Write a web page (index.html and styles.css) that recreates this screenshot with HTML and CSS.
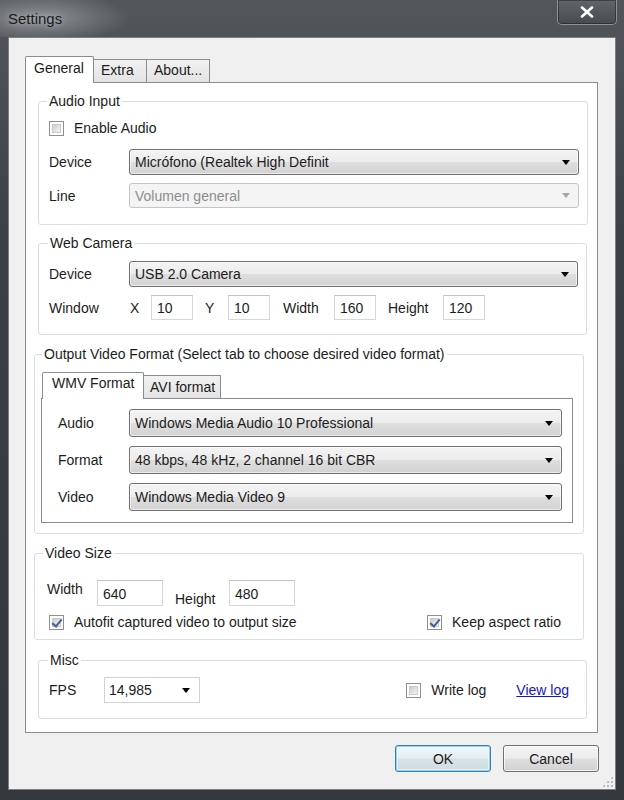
FILE: index.html
```html
<!DOCTYPE html>
<html lang="en">
<head>
  <meta charset="UTF-8" />
  <title>Settings</title>
  <link rel="stylesheet" href="styles.css">
</head>
<body>
  <div class="window">
    <div class="titlebar">
      <span class="title">Settings</span>
      <div class="close">
        <svg width="14" height="12" viewBox="0 0 14 12"><path d="M2 1.5 L12 10.5 M12 1.5 L2 10.5" stroke="#fff" stroke-width="2.6" stroke-linecap="round"/></svg>
      </div>
    </div>

    <div class="client">
      <div class="tabs">
        <div class="tab active">General</div>
        <div class="tab">Extra</div>
        <div class="tab">About...</div>
      </div>

      <div class="panel">
        <fieldset class="group audio">
          <legend>Audio Input</legend>
          <div class="check-row">
            <span class="checkbox"></span>
            <span>Enable Audio</span>
          </div>
          <div class="row r-device">
            <span class="lbl">Device</span>
            <div class="combo"><span>Micrófono (Realtek High Definit</span><i class="arrow"></i></div>
          </div>
          <div class="row r-line">
            <span class="lbl">Line</span>
            <div class="combo disabled"><span>Volumen general</span><i class="arrow"></i></div>
          </div>
        </fieldset>

        <fieldset class="group webcam">
          <legend>Web Camera</legend>
          <div class="row">
            <span class="lbl">Device</span>
            <div class="combo"><span>USB 2.0 Camera</span><i class="arrow"></i></div>
          </div>
          <div class="row r-window">
            <span class="lbl">Window</span>
            <span class="lbl-x">X</span>
            <div class="text small">10</div>
            <span class="lbl-y">Y</span>
            <div class="text small">10</div>
            <span class="lbl-w">Width</span>
            <div class="text small">160</div>
            <span class="lbl-h">Height</span>
            <div class="text small">120</div>
          </div>
        </fieldset>

        <fieldset class="group output">
          <legend>Output Video Format (Select tab to choose desired video format)</legend>
          <div class="tabs inner">
            <div class="tab active">WMV Format</div>
            <div class="tab">AVI format</div>
          </div>
          <div class="inner-panel">
            <div class="row">
              <span class="lbl">Audio</span>
              <div class="combo"><span>Windows Media Audio 10 Professional</span><i class="arrow"></i></div>
            </div>
            <div class="row">
              <span class="lbl">Format</span>
              <div class="combo"><span>48 kbps, 48 kHz, 2 channel 16 bit CBR</span><i class="arrow"></i></div>
            </div>
            <div class="row">
              <span class="lbl">Video</span>
              <div class="combo"><span>Windows Media Video 9</span><i class="arrow"></i></div>
            </div>
          </div>
        </fieldset>

        <fieldset class="group size">
          <legend>Video Size</legend>
          <div class="row r-size">
            <span class="lbl-sw">Width</span>
            <div class="text wide">640</div>
            <span class="lbl-sh">Height</span>
            <div class="text wide">480</div>
          </div>
          <div class="check-row r-fit">
            <span class="checkbox checked"></span>
            <span>Autofit captured video to output size</span>
            <span class="checkbox checked push"></span>
            <span>Keep aspect ratio</span>
          </div>
        </fieldset>

        <fieldset class="group misc">
          <legend>Misc</legend>
          <div class="row">
            <span class="lbl-fps">FPS</span>
            <div class="combo flat"><span>14,985</span><i class="arrow"></i></div>
            <span class="checkbox push"></span>
            <span>Write log</span>
            <a class="link" href="#">View log</a>
          </div>
        </fieldset>
      </div>

      <div class="buttons">
        <div class="btn default">OK</div>
        <div class="btn">Cancel</div>
      </div>
      <div class="grip"></div>
    </div>
  </div>
</body>
</html>
```

FILE: styles.css
```css
* {
  box-sizing: border-box;
}
body {
  margin: 0;
  font-family: "Liberation Sans", Arial, sans-serif;
  font-size: 14px;
  color: #1c1c1c;
  background: #2f3337;
}
.window {
  width: 624px;
  height: 800px;
  background: linear-gradient(180deg, #53575c 0%, #3c4045 30%, #34383d 100%);
}

/* title bar */
.titlebar {
  height: 37px;
  display: flex;
  justify-content: space-between;
  align-items: flex-start;
  padding-left: 8px;
  background: radial-gradient(ellipse 90px 26px at 40px 18px, rgba(190, 195, 200, 0.55), rgba(190, 195, 200, 0) 100%);
}
.title {
  margin-top: 10px;
  font-size: 15px;
  color: #1b1b1b;
  text-shadow: 0 0 6px rgba(255, 255, 255, 0.5);
}
.close {
  width: 60px;
  height: 25px;
  margin-right: 7px;
  border: 1px solid #8d9297;
  border-top: none;
  border-radius: 0 0 5px 5px;
  background: linear-gradient(180deg, #60656a, #464b50);
  box-shadow: inset 0 0 0 1px rgba(0, 0, 0, 0.35);
  display: flex;
  justify-content: center;
  align-items: center;
}

/* client area */
.client {
  position: relative;
  margin-left: 8px;
  width: 608px;
  height: 753px;
  background: #f0f0f0;
  border: 1px solid #7b7f83;
  padding: 17px 16px 0 16px;
}
.tabs {
  display: flex;
  align-items: flex-end;
  height: 27px;
}
.tab {
  height: 23px;
  padding: 2px 8px 0 7px;
  border: 1px solid #898c95;
  border-bottom: none;
  border-left: none;
  background: linear-gradient(180deg, #f2f2f2, #e3e3e3);
}
.tab.active {
  height: 27px;
  padding: 3px 10px 0 8px;
  border-left: 1px solid #898c95;
  border-radius: 2px 2px 0 0;
  background: #fff;
  margin-bottom: -1px;
  position: relative;
  z-index: 1;
}
.tabs .tab:nth-child(2) { width: 53px; }
.tabs .tab:nth-child(3) { width: 63px; }
.tabs .tab.active { width: 69px; }
.panel {
  width: 573px;
  height: 651px;
  border: 1px solid #898c95;
  background: #fff;
  padding-top: 10px;
}

/* group boxes */
.group {
  margin: 0;
  padding: 0;
  min-width: 0;
  border: 1px solid #d5dfe5;
  border-radius: 3px;
}
.group legend {
  margin-left: -2px;
  padding: 0 2px;
  line-height: 16px;
  height: 16px;
}
.row {
  display: flex;
  align-items: center;
}
.lbl {
  width: 80px;
  flex-shrink: 0;
}
.check-row {
  display: flex;
  align-items: center;
  height: 20px;
}

.audio {
  margin-left: 12px;
  width: 550px;
  height: 132px;
  padding: 9px 8px 0 10px;
}
.audio .r-device { margin-top: 11px; }
.audio .r-line { margin-top: 8px; }
.audio .r-line .combo { height: 25px; }

.webcam {
  margin: 10px 0 0 12px;
  width: 549px;
  height: 100px;
  padding: 10px 8px 0 10px;
}
.webcam legend { margin-left: -1px; }
.r-window { margin-top: 8px; }
.lbl-x { width: 22px; padding-left: 1px; }
.lbl-y { width: 23px; margin-left: 12px; }
.lbl-w { width: 51px; margin-left: 13px; }
.lbl-h { width: 55px; margin-left: 12px; }

.output {
  margin: 11px 0 0 8px;
  width: 550px;
  height: 188px;
  padding: 10px 10px 0 6px;
}
.output legend { margin-left: 1px; }
.tabs.inner {
  height: 26px;
  padding-left: 1px;
}
.tabs.inner .tab { width: 77px; height: 23px; padding: 3px 0 0 6px; }
.tabs.inner .tab.active { width: 102px; height: 27px; padding: 2px 0 0 9px; }
.inner-panel {
  width: 532px;
  height: 125px;
  border: 1px solid #898c95;
  background: #fff;
  padding: 10px 0 0 16px;
}
.inner-panel .row + .row { margin-top: 9px; }
.inner-panel .lbl { width: 71px; }
.inner-panel .combo { width: 433px; height: 28px; }

.size {
  margin: 11px 0 0 8px;
  width: 550px;
  height: 95px;
  padding: 19px 22px 0 12px;
}
.size legend { margin-left: -4px; }
.r-size { align-items: flex-start; height: 26px; }
.lbl-sw { width: 50px; margin-top: 1px; }
.lbl-sh { width: 54px; margin-left: 12px; margin-top: 11px; }
.r-fit { margin-top: 8px; padding-left: 2px; height: 16px; }

.misc {
  margin: 12px 0 0 12px;
  width: 549px;
  height: 67px;
  padding: 9px 17px 0 10px;
}
.misc legend { margin-left: -1px; }
.lbl-fps { width: 55px; }
.link {
  margin-left: 30px;
  color: #1414c8;
  text-decoration: underline;
}

/* controls */
.combo {
  width: 450px;
  height: 26px;
  display: flex;
  align-items: center;
  justify-content: space-between;
  padding: 0 8px 0 5px;
  border: 1px solid #707070;
  border-radius: 3px;
  background: linear-gradient(180deg, #f4f4f4 0%, #ececec 48%, #dedede 52%, #d2d2d2 100%);
  box-shadow: inset 0 0 0 1px rgba(255, 255, 255, 0.6);
  white-space: nowrap;
}
.combo.disabled {
  border-color: #c3c6c9;
  background: #f4f4f4;
  color: #8c8c8c;
  box-shadow: none;
}
.combo.flat {
  width: 96px;
  border-color: #d2d2d2;
  border-radius: 0;
  background: #fff;
  box-shadow: none;
  padding: 0 9px 0 4px;
}
.arrow {
  width: 0;
  height: 0;
  border-left: 4px solid transparent;
  border-right: 4px solid transparent;
  border-top: 5px solid #000;
}
.disabled .arrow { border-top-color: #a6a6a6; }
.text {
  height: 25px;
  background: #fff;
  border: 1px solid #d4d7db;
  border-top-color: #bfc3c8;
  padding: 2px 0 0 5px;
  line-height: 20px;
}
.text.small { width: 42px; }
.text.wide { width: 66px; height: 26px; padding-top: 3px; }
.checkbox {
  width: 15px;
  height: 15px;
  flex-shrink: 0;
  border: 1px solid #8e8f8f;
  background: #fff;
  margin: 0 10px 0 0;
  position: relative;
}
.checkbox::before {
  content: "";
  position: absolute;
  inset: 2px;
  background: linear-gradient(135deg, #cdcdcd, #f5f5f5);
  border: 1px solid #c9c9c9;
}
.checkbox.checked::after {
  content: "";
  position: absolute;
  left: 4px;
  top: 1px;
  width: 4px;
  height: 8px;
  border-right: 2px solid #4b5e96;
  border-bottom: 2px solid #4b5e96;
  transform: rotate(40deg);
}
.push { margin-left: auto; }

.buttons {
  display: flex;
  justify-content: flex-end;
  gap: 12px;
  margin-top: 12px;
}
.btn {
  width: 96px;
  height: 27px;
  display: flex;
  align-items: center;
  justify-content: center;
  border: 1px solid #707070;
  border-radius: 3px;
  background: linear-gradient(180deg, #f4f4f4 0%, #ececec 48%, #dedede 52%, #d2d2d2 100%);
  box-shadow: inset 0 0 0 1px rgba(255, 255, 255, 0.7);
}
.btn.default {
  border-color: #3c7fb1;
  box-shadow: inset 0 0 0 1px #8cd2f5, inset 0 0 0 2px rgba(255, 255, 255, 0.6);
  background: linear-gradient(180deg, #f0f6f9 0%, #e6eef2 48%, #d6e2e8 52%, #cfdce2 100%);
}
.grip {
  position: absolute;
  right: 2px;
  bottom: 2px;
  width: 11px;
  height: 11px;
  background: radial-gradient(circle, #b8b8b8 1px, transparent 1.2px) 0 0 / 4px 4px;
  clip-path: polygon(100% 0, 100% 100%, 0 100%);
}
```
